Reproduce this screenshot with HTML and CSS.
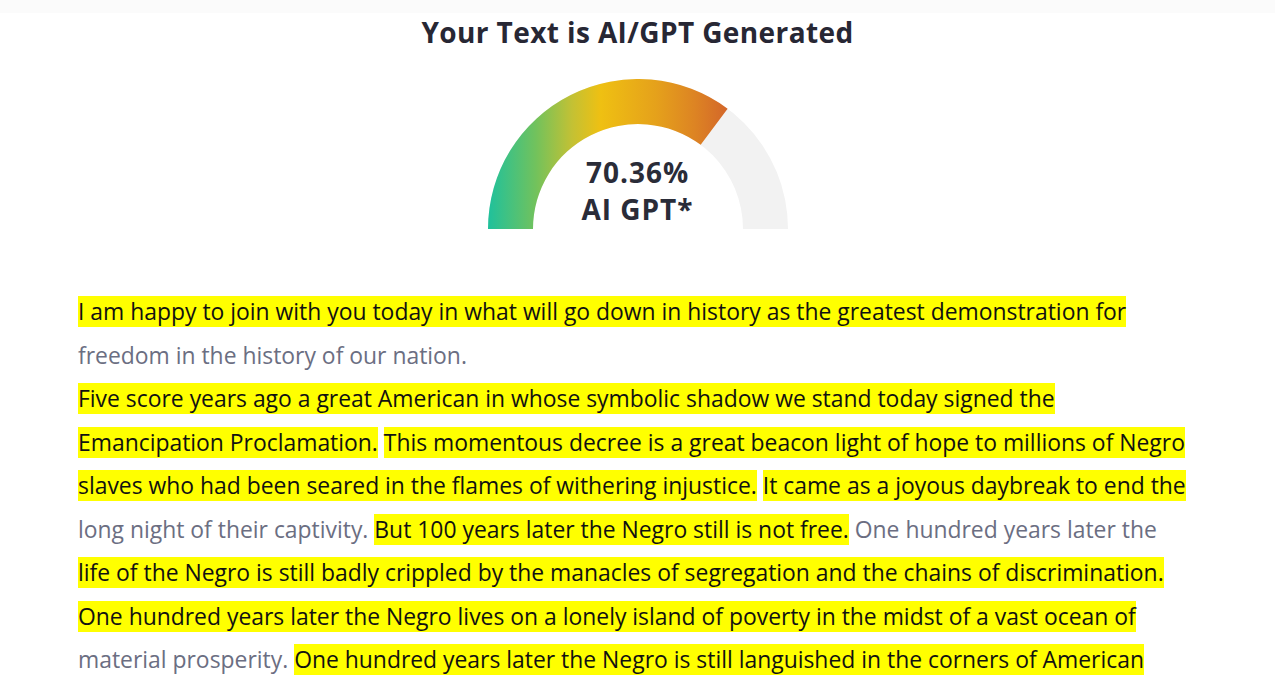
FILE: index.html
```html
<!DOCTYPE html>
<html lang="en">
<head>
<meta charset="utf-8">
<title>AI Detection Result</title>
<link rel="stylesheet" href="styles.css">
</head>
<body>
<div class="top-band"></div>
<main class="result">
  <h1 class="result-title">Your Text is AI/GPT Generated</h1>
  <div class="gauge">
    <svg class="gauge-svg" width="300" height="150" viewBox="0 0 300 150" aria-hidden="true">
      <defs>
        <linearGradient id="gaugeGrad" gradientUnits="userSpaceOnUse" x1="0" y1="0" x2="240" y2="0">
          <stop offset="0" stop-color="#1fc19c"/>
          <stop offset="0.2" stop-color="#72c25c"/>
          <stop offset="0.35" stop-color="#c3c134"/>
          <stop offset="0.47" stop-color="#efc012"/>
          <stop offset="0.7" stop-color="#e5a11b"/>
          <stop offset="0.86" stop-color="#dd8423"/>
          <stop offset="1" stop-color="#d3662a"/>
        </linearGradient>
      </defs>
      <path d="M0 150 A150 150 0 0 1 300 150 L255 150 A105 105 0 0 0 45 150 Z" fill="#f2f2f2"/>
      <path d="M0 150 A150 150 0 0 1 239.6 29.7 L212.7 65.8 A105 105 0 0 0 45 150 Z" fill="url(#gaugeGrad)"/>
    </svg>
    <div class="gauge-label">
      <span class="gauge-value">70.36%</span>
      <span class="gauge-caption">AI GPT*</span>
    </div>
  </div>

  <div class="analysed-text">
    <p class="text-block"><span class="hl">I am happy to join with you today in what will go down in history as the greatest demonstration for</span><br>freedom in the history of our nation.</p>
    <p class="text-block"><span class="hl">Five score years ago a great American in whose symbolic shadow we stand today signed the<br>Emancipation Proclamation.</span> <span class="hl">This momentous decree is a great beacon light of hope to millions of Negro<br>slaves who had been seared in the flames of withering injustice.</span> <span class="hl">It came as a joyous daybreak to end the</span><br>long night of their captivity. <span class="hl">But 100 years later the Negro still is not free.</span> One hundred years later the<br><span class="hl">life of the Negro is still badly crippled by the manacles of segregation and the chains of discrimination.</span><br><span class="hl">One hundred years later the Negro lives on a lonely island of poverty in the midst of a vast ocean of</span><br>material prosperity. <span class="hl">One hundred years later the Negro is still languished in the corners of American</span><br>society and finds himself an exile in his own land.</p>
  </div>
</main>
</body>
</html>
```

FILE: styles.css
```css
html, body {
  margin: 0;
  padding: 0;
  overflow: hidden;
  background: #ffffff;
}

body {
  font-family: "Open Sans", "Noto Sans", "Liberation Sans", sans-serif;
  color: #6b6e82;
}

.top-band {
  height: 13px;
  background: #fbfbfb;
}

.result {
  display: flex;
  flex-direction: column;
  align-items: center;
}

.result-title {
  margin: 0;
  font-size: 28px;
  line-height: 38px;
  font-weight: 700;
  letter-spacing: 0.4px;
  color: #272734;
}

.gauge {
  position: relative;
  width: 300px;
  height: 150px;
  margin-top: 28px;
}

.gauge-svg {
  display: block;
}

.gauge-label {
  position: absolute;
  left: 0;
  right: 0;
  bottom: 1px;
  display: flex;
  flex-direction: column;
  align-items: center;
  font-weight: 700;
  font-size: 28px;
  line-height: 37px;
  letter-spacing: 1px;
  color: #2a2c38;
}

.analysed-text {
  align-self: stretch;
  padding: 0 60px 0 78px;
  margin-top: 61px;
}

.text-block {
  margin: 0;
  font-size: 22.9px;
  line-height: 43.5px;
}

.hl {
  background: #ffff00;
  color: #111111;
}
```
